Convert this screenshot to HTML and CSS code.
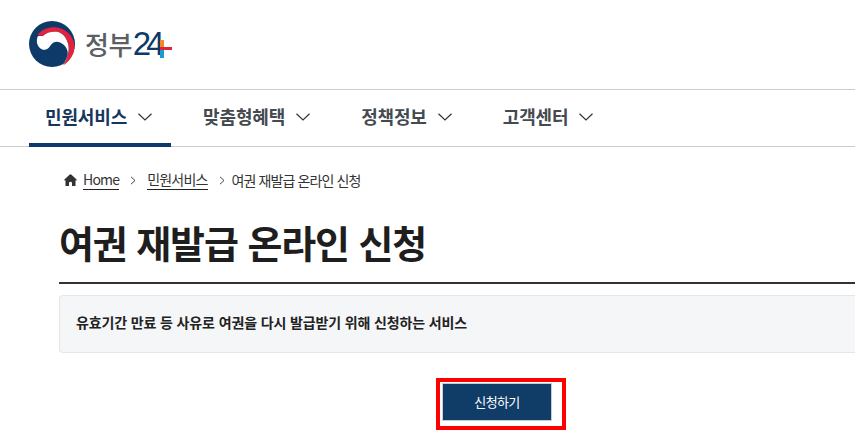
FILE: index.html
```html
<!DOCTYPE html>
<html lang="ko">
<head>
    <meta charset="UTF-8">
    <meta name="viewport" content="width=device-width, initial-scale=1.0">
    <title>여권 재발급 온라인 신청 | 정부24</title>
    <link rel="stylesheet" href="styles.css">
</head>
<body>
    <header class="site-header">
        <a class="logo" href="#">
            <svg class="logo-mark" width="48" height="48" viewBox="0 0 48 48">
                <circle cx="24" cy="24" r="23" fill="#0d3a68"/>
                <path d="M9.500 15 C14 9 21 7 27 7.300 C37 8 46 16 46.500 26 C46.800 34 42 41 35 45.500 C39 40 41 33 40.500 26.500 C39.500 18 34 12 28 11.700 C22 11.500 18 13 15 16 Z" fill="#e2233d"/>
                <path d="M10 16 L15 16 C18 13 22 11.500 28 11.700 C34 12 39.500 18 40.500 26.500 C41 33 39 40 35 45.500 C38.500 39 40.500 35 39.500 31 C38.500 26 33 21.500 28.500 21.700 C24 22 22.500 26 20.500 28 C18.500 30 15 30.500 12.500 28.500 C8.500 25.500 8 20 10 16 Z" fill="#fff"/>
            </svg>
            <span class="logo-name">정부</span><span class="logo-num">24</span><span class="logo-plus"></span>
        </a>
    </header>

    <nav class="gnb">
        <a class="gnb-item is-active" href="#">민원서비스 <svg class="chev" width="14" height="8" viewBox="0 0 14 8"><path d="M.5 .7 L7 7 L13.500 .7" fill="none" stroke="#333" stroke-width="1.200"/></svg></a>
        <a class="gnb-item" href="#">맞춤형혜택 <svg class="chev" width="14" height="8" viewBox="0 0 14 8"><path d="M.5 .7 L7 7 L13.500 .7" fill="none" stroke="#333" stroke-width="1.200"/></svg></a>
        <a class="gnb-item" href="#">정책정보 <svg class="chev" width="14" height="8" viewBox="0 0 14 8"><path d="M.5 .7 L7 7 L13.500 .7" fill="none" stroke="#333" stroke-width="1.200"/></svg></a>
        <a class="gnb-item" href="#">고객센터 <svg class="chev" width="14" height="8" viewBox="0 0 14 8"><path d="M.5 .7 L7 7 L13.500 .7" fill="none" stroke="#333" stroke-width="1.200"/></svg></a>
    </nav>

    <main class="content">
        <ol class="crumbs">
            <li>
                <svg class="home" width="13" height="12" viewBox="0 0 13 12"><path d="M6.500 .3 Q7 .3 7.500 .8 L12.600 5.400 Q13.200 6.400 12 6.500 L11.500 6.500 L11.500 12 L8 12 L8 8.500 Q6.500 7 5 8.500 L5 12 L1.500 12 L1.500 6.500 L1 6.500 Q-.2 6.400 .4 5.400 L5.500 .8 Q6 .3 6.500 .3 Z" fill="#333"/></svg>
                <a href="#">Home</a>
            </li>
            <li class="sep"><svg width="6" height="9" viewBox="0 0 6 9"><path d="M1 .8 L5 4.500 L1 8.200" fill="none" stroke="#444" stroke-width="1"/></svg></li>
            <li><a href="#">민원서비스</a></li>
            <li class="sep sep-last"><svg width="6" height="9" viewBox="0 0 6 9"><path d="M1 .8 L5 4.500 L1 8.200" fill="none" stroke="#444" stroke-width="1"/></svg></li>
            <li class="crumb-now">여권 재발급 온라인 신청</li>
        </ol>

        <h1 class="page-title">여권 재발급 온라인 신청</h1>

        <p class="summary">유효기간 만료 등 사유로 여권을 다시 발급받기 위해 신청하는 서비스</p>

        <div class="actions">
            <div class="highlight">
                <a class="btn-apply" href="#">신청하기</a>
            </div>
        </div>
    </main>
</body>
</html>
```

FILE: styles.css
```css
html, body {
    margin: 0;
    padding: 0;
}
body {
    font-family: "Noto Sans CJK KR", "Noto Sans", sans-serif;
    background: #fff;
    color: #1e1e1e;
}
a {
    color: inherit;
    text-decoration: none;
}

.site-header {
    height: 89px;
    border-bottom: 1px solid #ccc;
    padding-left: 28px;
    display: flex;
    align-items: center;
}
.logo {
    display: flex;
    align-items: center;
    position: relative;
    margin-top: -1px;
}
.logo-mark {
    margin-right: 9px;
}
.logo-name {
    font-size: 26px;
    font-weight: 500;
    line-height: 30px;
    color: #5c5f64;
    letter-spacing: -0.5px;
}
.logo-num {
    font-family: "Liberation Sans", sans-serif;
    font-size: 33px;
    line-height: 30px;
    color: #0d3a68;
    letter-spacing: -5px;
    margin-left: 1px;
}
.logo-plus {
    position: absolute;
    left: 132px;
    top: 20px;
    width: 4px;
    height: 18px;
    background: linear-gradient(#f08a24 0 7px, #1b9ad6 10px);
}
.logo-plus::after {
    content: "";
    position: absolute;
    left: 0;
    top: 7px;
    width: 12px;
    height: 3px;
    background: #e2233d;
}

.gnb {
    display: flex;
    height: 56px;
    padding-left: 29px;
    border-bottom: 1px solid #ccc;
}
.gnb-item {
    display: flex;
    align-items: center;
    gap: 11px;
    height: 56px;
    padding: 0 19px 4px 16px;
    margin-right: 16px;
    box-sizing: border-box;
    font-size: 18px;
    font-weight: 700;
    color: #444a50;
    letter-spacing: -0.15px;
}
.gnb-item.is-active {
    color: #17365c;
    border-bottom: 4px solid #0d3a6e;
    height: 57px;
    padding-top: 0;
    padding-bottom: 1px;
}
.chev {
    margin-top: 2px;
}

.content {
    margin-left: 59px;
}
.crumbs {
    list-style: none;
    margin: 0;
    padding: 23px 0 0 5px;
    display: flex;
    align-items: center;
    gap: 11px;
    font-size: 14px;
    line-height: 20px;
    letter-spacing: -0.8px;
    color: #333;
}
.crumbs li {
    display: flex;
    align-items: center;
    gap: 6px;
}
.crumbs .sep-last {
    margin-right: -4px;
}
.crumb-now {
    letter-spacing: -0.9px;
}
.crumbs a {
    border-bottom: 1px solid #222;
    line-height: 19px;
}
.home {
    display: block;
}

.page-title {
    margin: 24px 0 0;
    padding-bottom: 12px;
    border-bottom: 2px solid #333;
    font-size: 38px;
    line-height: 56px;
    font-weight: 700;
    letter-spacing: -1.1px;
    color: #1e1e1e;
}
.summary {
    margin: 11px 0 0;
    padding: 0 16px 4px;
    height: 58px;
    display: flex;
    align-items: center;
    box-sizing: border-box;
    background: #f5f6f8;
    border: 1px solid #e6e6ea;
    border-right: 0;
    border-radius: 4px 0 0 4px;
    font-size: 14px;
    font-weight: 700;
    letter-spacing: -0.13px;
    color: #222;
}
.actions {
    display: flex;
    justify-content: center;
    margin-top: 25px;
    padding-left: 88px;
}
.highlight {
    border: 4px solid #f00;
    padding: 1px 10px 5px 2px;
}
.btn-apply {
    display: flex;
    align-items: center;
    justify-content: center;
    width: 110px;
    height: 38px;
    padding-bottom: 2px;
    box-sizing: border-box;
    background: #0f3d68;
    border: 1px solid #c8ccd2;
    color: #fff;
    font-size: 13px;
    letter-spacing: -0.6px;
}
```
